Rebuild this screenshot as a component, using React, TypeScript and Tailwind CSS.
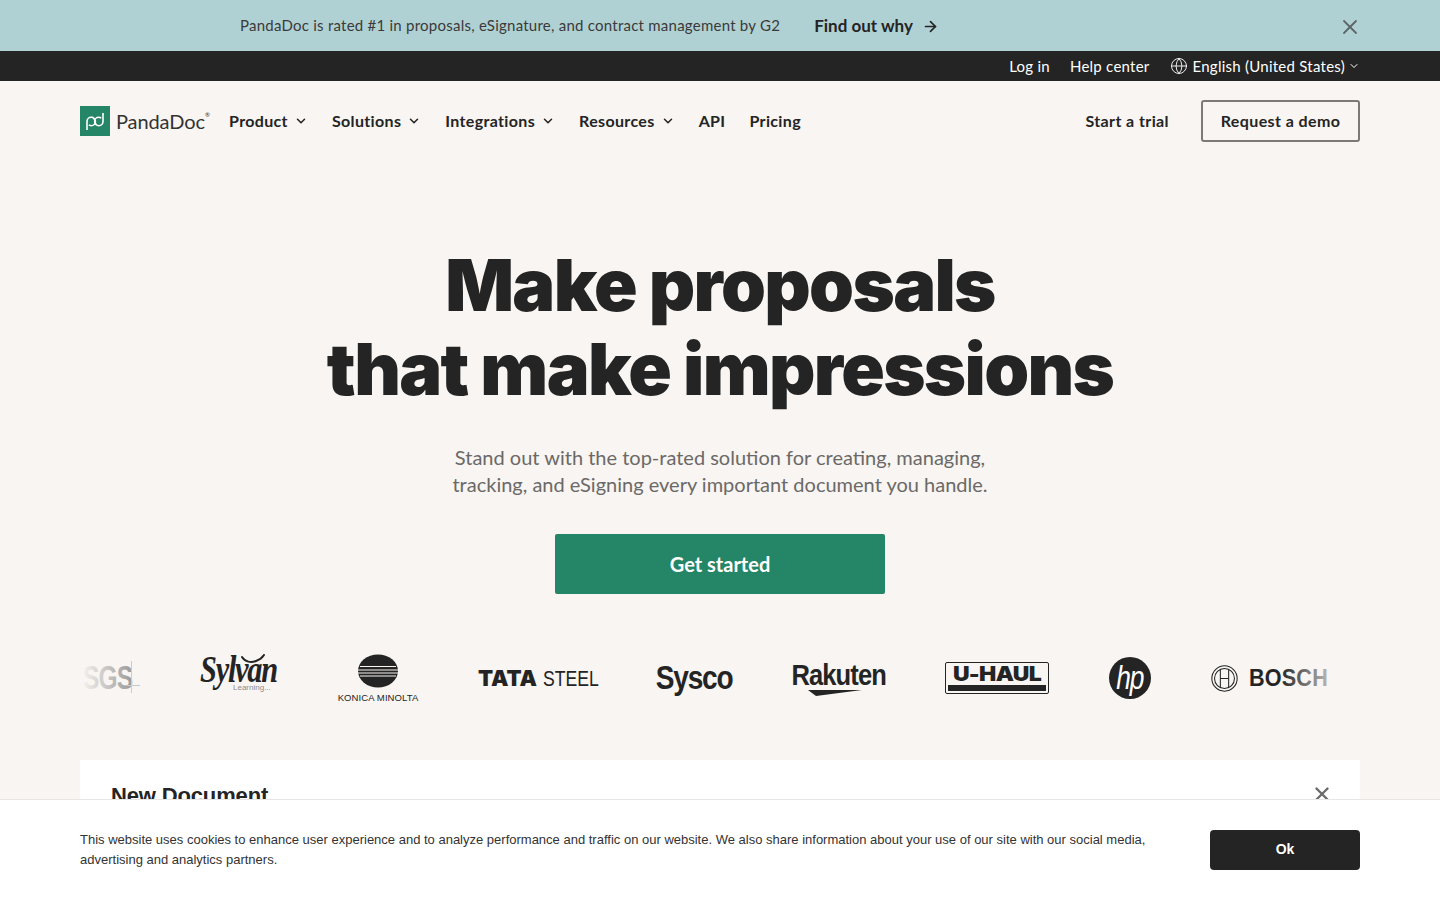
import React from 'react';
import { ArrowRight, ChevronDown, Globe, X } from 'lucide-react';

const navItems = [
  { label: 'Product', menu: true },
  { label: 'Solutions', menu: true },
  { label: 'Integrations', menu: true },
  { label: 'Resources', menu: true },
  { label: 'API', menu: false },
  { label: 'Pricing', menu: false },
];

const PandaMark: React.FC = () => (
  <svg width="30" height="30" viewBox="0 0 30 30" className="shrink-0">
    <rect width="30" height="30" fill="#248567" />
    <path
      d="M7 24V15.5a4.2 4.2 0 1 1 4.2 4.2c-1 0-1.9-.4-2.4-.9M23 7v8.5a4.2 4.2 0 1 1-4.2-4.2c1 0 1.9.4 2.4.9M11.4 11.3c2.4 0 3.2 1.6 3.6 4.2s1.4 4.2 3.8 4.2"
      fill="none"
      stroke="#fff"
      strokeWidth="1.6"
    />
  </svg>
);

const Logos: React.FC = () => (
  <div className="relative h-[60px] mt-[54px] pl-[83px] flex items-center gap-[60px] font-['Liberation_Sans',sans-serif] text-[#242424]">
    <div className="w-[57px] shrink-0 relative h-[40px] flex items-center">
      <span className="font-bold text-[33px] leading-[40px] text-[#8d8d8d] tracking-[-1px] inline-block scale-x-[.74] origin-left">SGS</span>
      <span className="absolute left-[48px] top-[3px] h-[32px] border-l border-[#c4c4c4]" />
      <span className="absolute left-[44px] right-0 top-[27px] border-t border-[#c4c4c4]" />
    </div>
    <div className="w-[78px] shrink-0 relative h-[46px]">
      <svg width="32" height="12" viewBox="0 0 32 12" className="absolute left-[39px] top-[-1px]" fill="none" stroke="#242424" strokeWidth="2" strokeLinecap="round">
        <path d="M3 3c3 5 9 6 14 4 3-1 6-3 8-6" />
      </svg>
      <span className="absolute left-0 top-[3px] font-['Liberation_Serif',serif] italic font-bold text-[37px] leading-[24px] tracking-[-1.5px] inline-block scale-x-[.82] origin-left">Sylvan</span>
      <span className="absolute left-[33px] top-[28px] text-[8px] leading-[10px] text-[#8c8c8c]">Learning...</span>
    </div>
    <div className="w-[80px] shrink-0 flex flex-col items-center">
      <svg width="40" height="34" viewBox="0 0 40 34">
        <ellipse cx="20" cy="17" rx="20" ry="16.5" fill="#242424" />
        <path d="M2 12.5h36M0 16h40M0 19h40M2 22h36" stroke="#f8f5f2" strokeWidth="1" />
      </svg>
      <span className="text-[9.5px] leading-[10px] mt-[5px] whitespace-nowrap tracking-[.1px]">KONICA MINOLTA</span>
    </div>
    <div className="w-[118px] shrink-0 flex items-baseline gap-[6px] whitespace-nowrap">
      <span className="font-black font-['Inter',sans-serif] text-[22px]">TATA</span>
      <span className="text-[22px] inline-block scale-x-[.8] origin-left">STEEL</span>
    </div>
    <div className="w-[76px] shrink-0 flex justify-center whitespace-nowrap">
      <span className="font-bold text-[33px] tracking-[-1.4px] inline-block scale-x-[.85]">Sysco</span>
    </div>
    <div className="w-[93px] shrink-0 flex flex-col items-center">
      <span className="font-bold text-[29px] leading-[30px] tracking-[-1px] inline-block scale-x-[.88] whitespace-nowrap">Rakuten</span>
      <svg width="54" height="6" viewBox="0 0 54 6" className="ml-[-8px]">
        <path d="M0 0 54 0 8 6Z" fill="#242424" />
      </svg>
    </div>
    <div className="w-[104px] h-[32px] shrink-0 border border-[#242424] rounded-[2px] p-[2px] flex flex-col">
      <span className="text-[20px] leading-[19px] font-black font-['Inter',sans-serif] text-center tracking-[-.6px] whitespace-nowrap scale-x-[1.15]">U-HAUL</span>
      <span className="h-[6px] mt-auto bg-[#242424]" />
    </div>
    <div className="w-[42px] h-[42px] shrink-0 rounded-full bg-[#242424] flex items-center justify-center text-white">
      <span className="italic text-[33px] leading-[34px] tracking-[-1.5px] scale-x-[.8]">hp</span>
    </div>
    <div className="w-[116px] shrink-0 flex items-center gap-[11px]">
      <svg width="27" height="27" viewBox="0 0 26 26" fill="none" stroke="#242424" className="shrink-0">
        <circle cx="13" cy="13" r="12.2" />
        <circle cx="13" cy="13" r="9.6" />
        <path d="M9 4.5v17M17 4.5v17M9 13h8" />
      </svg>
      <span className="font-bold text-[24px] tracking-[.2px] inline-block scale-x-[.9] origin-left">BOSCH</span>
    </div>
    <div className="absolute left-[80px] top-0 bottom-0 w-[60px] bg-gradient-to-r from-[#f8f5f2] to-transparent" />
    <div className="absolute left-[1280px] top-0 bottom-0 w-[55px] bg-gradient-to-l from-[#f8f5f2]/80 to-transparent" />
  </div>
);

const App: React.FC = () => {
  return (
    <div className="h-screen overflow-hidden bg-[#f8f5f2] text-[#242424] font-['Lato',sans-serif]">
      <div className="h-[51px] bg-[#b0d1d3] relative flex items-center pl-[240px]">
        <span className="text-[15px] tracking-[.24px] text-[#3a3a3a]">PandaDoc is rated #1 in proposals, eSignature, and contract management by G2</span>
        <a className="ml-[34px] flex items-center gap-[9px] text-[17px] font-bold">
          Find out why <ArrowRight size={17} strokeWidth={2.4} className="mt-[1px]" />
        </a>
        <X size={24} strokeWidth={1.8} className="absolute left-[1338px] top-[15px] text-[#5c6668]" />
      </div>

      <div className="h-[30px] bg-[#242424] text-white text-[15px] tracking-[.25px] flex items-center justify-end gap-[20px] px-[80px]">
        <span>Log in</span>
        <span>Help center</span>
        <span className="flex items-center gap-[5px]">
          <Globe size={18} strokeWidth={1.2} />
          English (United States)
          <ChevronDown size={12} className="-ml-[2px]" />
        </span>
      </div>

      <header className="h-[80px] px-[80px] flex items-center">
        <div className="flex items-center gap-[6px] w-[149px] -mt-[1px]">
          <PandaMark />
          <span className="text-[20px] tracking-[-.1px] text-[#333] relative">
            PandaDoc<span className="text-[6px] leading-[6px] absolute left-full top-[6px]">®</span>
          </span>
        </div>
        <nav className="flex items-center gap-[24px] text-[16px] tracking-[.35px] font-bold">
          {navItems.map((item) => (
            <span key={item.label} className="flex items-center gap-[6px]">
              {item.label}
              {item.menu && <ChevronDown size={14} strokeWidth={2.6} />}
            </span>
          ))}
        </nav>
        <div className="ml-auto flex items-center gap-[32px] text-[16px] tracking-[.4px] font-bold">
          <span>Start a trial</span>
          <span className="h-[42px] w-[159px] flex items-center justify-center border-2 border-[#7c7a78] rounded-[3px]">Request a demo</span>
        </div>
      </header>

      <main>
        <section className="mt-[1px] pt-[2px] text-center">
          <h1 className="mt-[79px] font-['Inter',sans-serif] font-black text-[72px] leading-[84px] tracking-[-1.65px]">
            Make proposals
            <br />
            that make impressions
          </h1>
          <p className="mt-[33px] text-[20px] leading-[27px] text-[#6b6967]">
            Stand out with the top-rated solution for creating, managing,
            <br />
            tracking, and eSigning every important document you handle.
          </p>
          <button className="mt-[36px] w-[330px] h-[60px] bg-[#248567] text-white text-[20px] font-bold rounded-[2px]">
            Get started
          </button>
        </section>

        <Logos />

        <section className="mx-[80px] mt-[52px] h-[300px] bg-white px-[31px] pt-[21px] flex justify-between font-['Liberation_Sans',sans-serif]">
          <h2 className="text-[22px] leading-[30px] font-bold tracking-[-.15px]">New Document</h2>
          <X size={22} strokeWidth={2.6} className="text-[#6a6a6a] mr-[-4px] mt-[2px]" />
        </section>
      </main>

      <div className="fixed left-0 right-0 bottom-0 h-[101px] bg-white border-t border-[#e8e6e4] px-[80px] flex items-center justify-between font-['Liberation_Sans',sans-serif]">
        <p className="w-[1075px] text-[13px] leading-[20px] text-[#333]">
          This website uses cookies to enhance user experience and to analyze performance and traffic on our website. We also share information about your use of our site with our social media, advertising and analytics partners.
        </p>
        <button className="w-[150px] h-[40px] pb-[2px] bg-[#242424] text-white text-[14px] font-bold rounded-[4px]">Ok</button>
      </div>
    </div>
  );
};

export default App;
